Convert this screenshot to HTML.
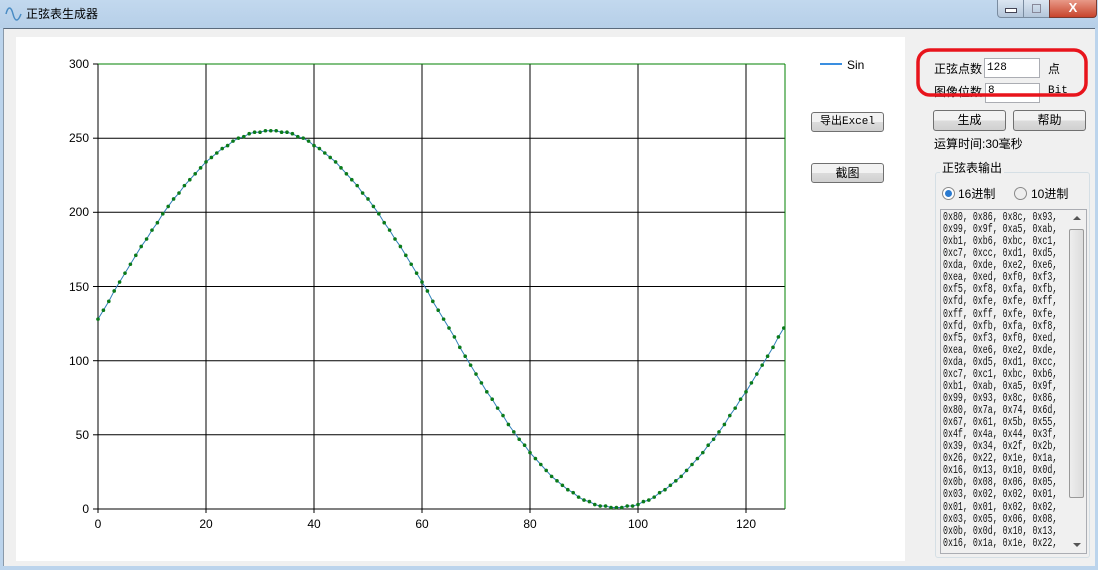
<!DOCTYPE html>
<html><head><meta charset="utf-8"><style>
body{margin:0;width:1098px;height:570px;overflow:hidden;background:#bcd4ec;font-family:"Liberation Sans","Noto Sans CJK SC",sans-serif;position:relative}
.abs{position:absolute}
.title{left:0;top:0;width:1098px;height:28px;background:linear-gradient(#c2d8ee,#b6cfe8)}
.client{left:3px;top:28px;width:1091px;height:537px;background:#f0f0f0;border-top:1px solid #5a6a7c;border-left:1px solid #8a9aaa}
.cjk{font-family:"Liberation Sans","Noto Sans CJK SC",sans-serif;font-size:12px;color:#000}
.btn{border:1px solid #707070;border-radius:3px;background:linear-gradient(#f2f2f2 50%,#dcdcdc 50%,#d0d0d0);text-align:center;font-size:12px;line-height:18px;box-sizing:border-box}
.tb{background:#fff;border:1px solid #abadb3;box-sizing:border-box;font-size:11px;font-family:"Liberation Mono",monospace;padding-left:2px;line-height:18px}
.list{font-family:"Liberation Mono",monospace;font-size:11.5px;line-height:12.07px;transform:scaleX(.72);transform-origin:0 0;white-space:pre;color:#111}
</style></head><body>
<div class="abs title"></div>
<svg class="abs" style="left:4px;top:4px" width="20" height="20"><path d="M2 10 C4 2,7 2,9 10 S14 18,17 10" fill="none" stroke="#4a8cc4" stroke-width="1.5"/></svg>
<div class="abs cjk" style="left:26px;top:5px;font-size:12px">正弦表生成器</div>
<div class="abs" style="left:997px;top:0;width:25px;height:17px;border:1px solid #7a8ca0;border-top:none;border-radius:0 0 0 4px;background:linear-gradient(#dbe6f2,#b4c6da)"><div style="margin:8px 7px;width:10px;height:3px;background:#fff;border:1px solid #445"></div></div>
<div class="abs" style="left:1023px;top:0;width:25px;height:17px;border:1px solid #7a8ca0;border-top:none;background:linear-gradient(#dbe6f2,#b4c6da)"><div style="margin:4px 8px;width:7px;height:7px;border:1px solid #889"></div></div>
<div class="abs" style="left:1049px;top:0;width:46px;height:17px;border:1px solid #7a3a30;border-top:none;border-radius:0 0 4px 0;background:linear-gradient(#e89a88,#c8442c);color:#fff;font-weight:bold;text-align:center;font-size:13px;line-height:15px">X</div>
<div class="abs client"></div>
<div class="abs" style="left:16px;top:37px;width:889px;height:524px;background:#fff"></div>
<svg class="abs" style="left:0;top:0" width="1098" height="570" id="ch">
<g stroke="#000" stroke-width="1">
<line x1="206" y1="64" x2="206" y2="509"/><line x1="314" y1="64" x2="314" y2="509"/><line x1="422" y1="64" x2="422" y2="509"/><line x1="530" y1="64" x2="530" y2="509"/><line x1="638" y1="64" x2="638" y2="509"/><line x1="746" y1="64" x2="746" y2="509"/>
<line x1="98" y1="138.2" x2="785" y2="138.2"/><line x1="98" y1="212.3" x2="785" y2="212.3"/><line x1="98" y1="286.5" x2="785" y2="286.5"/><line x1="98" y1="360.7" x2="785" y2="360.7"/><line x1="98" y1="434.8" x2="785" y2="434.8"/>
<line x1="98" y1="64" x2="98" y2="513"/><line x1="93" y1="509" x2="785" y2="509"/>
<line x1="93" y1="64" x2="98" y2="64"/><line x1="93" y1="138.2" x2="98" y2="138.2"/><line x1="93" y1="212.3" x2="98" y2="212.3"/><line x1="93" y1="286.5" x2="98" y2="286.5"/><line x1="93" y1="360.7" x2="98" y2="360.7"/><line x1="93" y1="434.8" x2="98" y2="434.8"/>
<line x1="206" y1="509" x2="206" y2="513"/><line x1="314" y1="509" x2="314" y2="513"/><line x1="422" y1="509" x2="422" y2="513"/><line x1="530" y1="509" x2="530" y2="513"/><line x1="638" y1="509" x2="638" y2="513"/><line x1="746" y1="509" x2="746" y2="513"/>
</g>
<line x1="98" y1="64" x2="785" y2="64" stroke="#008000"/><line x1="785" y1="64" x2="785" y2="509" stroke="#008000"/>
<g font-family="Liberation Sans" font-size="12" text-anchor="end" fill="#000">
<text x="89" y="68">300</text><text x="89" y="142">250</text><text x="89" y="216">200</text><text x="89" y="291">150</text><text x="89" y="365">100</text><text x="89" y="439">50</text><text x="89" y="513">0</text>
</g>
<g font-family="Liberation Sans" font-size="12" text-anchor="middle" fill="#000">
<text x="98" y="528">0</text><text x="206" y="528">20</text><text x="314" y="528">40</text><text x="422" y="528">60</text><text x="530" y="528">80</text><text x="638" y="528">100</text><text x="746" y="528">120</text>
</g>
<line x1="820" y1="64" x2="842" y2="64" stroke="#3a8ee0" stroke-width="2"/>
<text x="847" y="69" font-family="Liberation Sans" font-size="12">Sin</text>
</svg>
<div class="abs btn" style="left:811px;top:112px;width:73px;height:20px;font-family:'Liberation Mono','Noto Sans CJK SC',monospace;font-size:11px">导出Excel</div>
<div class="abs btn" style="left:811px;top:163px;width:73px;height:20px">截图</div>
<div class="abs cjk" style="left:934px;top:60px">正弦点数</div>
<div class="abs tb" style="left:984px;top:58px;width:56px;height:20px">128</div>
<div class="abs cjk" style="left:1048px;top:60px">点</div>
<div class="abs cjk" style="left:934px;top:83px">图像位数</div>
<div class="abs tb" style="left:985px;top:83px;width:55px;height:20px;line-height:14px">8</div>
<div class="abs" style="left:1048px;top:85px;font-family:'Liberation Mono';font-size:11px">Bit</div>
<svg class="abs" style="left:0;top:0" width="1098" height="120"><rect x="918" y="50" width="168" height="45" rx="12" fill="none" stroke="#e8141c" stroke-width="3.5"/></svg>
<div class="abs btn" style="left:933px;top:110px;width:73px;height:21px">生成</div>
<div class="abs btn" style="left:1013px;top:110px;width:73px;height:21px">帮助</div>
<div class="abs cjk" style="left:934px;top:135px">运算时间:30毫秒</div>
<div class="abs" style="left:935px;top:172px;width:153px;height:384px;border:1px solid #d5dfe5;border-radius:3px"></div>
<div class="abs cjk" style="left:940px;top:159px;background:#f0f0f0;padding:0 2px">正弦表输出</div>
<div class="abs" style="left:942px;top:187px;width:11px;height:11px;border-radius:50%;border:1px solid #8a8a8a;background:#fff"><div style="margin:2px;width:7px;height:7px;border-radius:50%;background:#2a7ad0"></div></div>
<div class="abs cjk" style="left:958px;top:185px">16进制</div>
<div class="abs" style="left:1014px;top:187px;width:11px;height:11px;border-radius:50%;border:1px solid #8a8a8a;background:#eee"></div>
<div class="abs cjk" style="left:1031px;top:185px">10进制</div>
<div class="abs" style="left:940px;top:209px;width:145px;height:343px;border:1px solid #abadb3;background:#f0f0f0;overflow:hidden">
<div class="list" style="position:absolute;left:2px;top:2px">0x80, 0x86, 0x8c, 0x93,
0x99, 0x9f, 0xa5, 0xab,
0xb1, 0xb6, 0xbc, 0xc1,
0xc7, 0xcc, 0xd1, 0xd5,
0xda, 0xde, 0xe2, 0xe6,
0xea, 0xed, 0xf0, 0xf3,
0xf5, 0xf8, 0xfa, 0xfb,
0xfd, 0xfe, 0xfe, 0xff,
0xff, 0xff, 0xfe, 0xfe,
0xfd, 0xfb, 0xfa, 0xf8,
0xf5, 0xf3, 0xf0, 0xed,
0xea, 0xe6, 0xe2, 0xde,
0xda, 0xd5, 0xd1, 0xcc,
0xc7, 0xc1, 0xbc, 0xb6,
0xb1, 0xab, 0xa5, 0x9f,
0x99, 0x93, 0x8c, 0x86,
0x80, 0x7a, 0x74, 0x6d,
0x67, 0x61, 0x5b, 0x55,
0x4f, 0x4a, 0x44, 0x3f,
0x39, 0x34, 0x2f, 0x2b,
0x26, 0x22, 0x1e, 0x1a,
0x16, 0x13, 0x10, 0x0d,
0x0b, 0x08, 0x06, 0x05,
0x03, 0x02, 0x02, 0x01,
0x01, 0x01, 0x02, 0x02,
0x03, 0x05, 0x06, 0x08,
0x0b, 0x0d, 0x10, 0x13,
0x16, 0x1a, 0x1e, 0x22,</div>
<div style="position:absolute;left:127px;top:0;width:17px;height:343px;background:#f0f0f0">
<div style="position:absolute;left:5px;top:6px;border:4px solid transparent;border-bottom:4px solid #555;border-top:none"></div>
<div style="position:absolute;left:1px;top:19px;width:13px;height:267px;border:1px solid #999;border-radius:2px;background:linear-gradient(90deg,#eee,#dcdcdc)"></div>
<div style="position:absolute;left:5px;top:333px;border:4px solid transparent;border-top:4px solid #555;border-bottom:none"></div>
</div>
</div>
<script>
var s=document.getElementById('ch'),ns='http://www.w3.org/2000/svg',pts=[];
for(var i=0;i<128;i++){var v=Math.round(128+127*Math.sin(2*Math.PI*i/128));pts.push([98+i*5.4,509-v*445/300]);}
var p=document.createElementNS(ns,'polyline');p.setAttribute('points',pts.map(function(a){return a.join(',')}).join(' '));p.setAttribute('fill','none');p.setAttribute('stroke','#2f7fb8');p.setAttribute('stroke-width','1');s.appendChild(p);
pts.forEach(function(a){var c=document.createElementNS(ns,'circle');c.setAttribute('cx',a[0]);c.setAttribute('cy',a[1]);c.setAttribute('r','1.8');c.setAttribute('fill','#0a7a1a');s.appendChild(c);});
</script>
</body></html>
